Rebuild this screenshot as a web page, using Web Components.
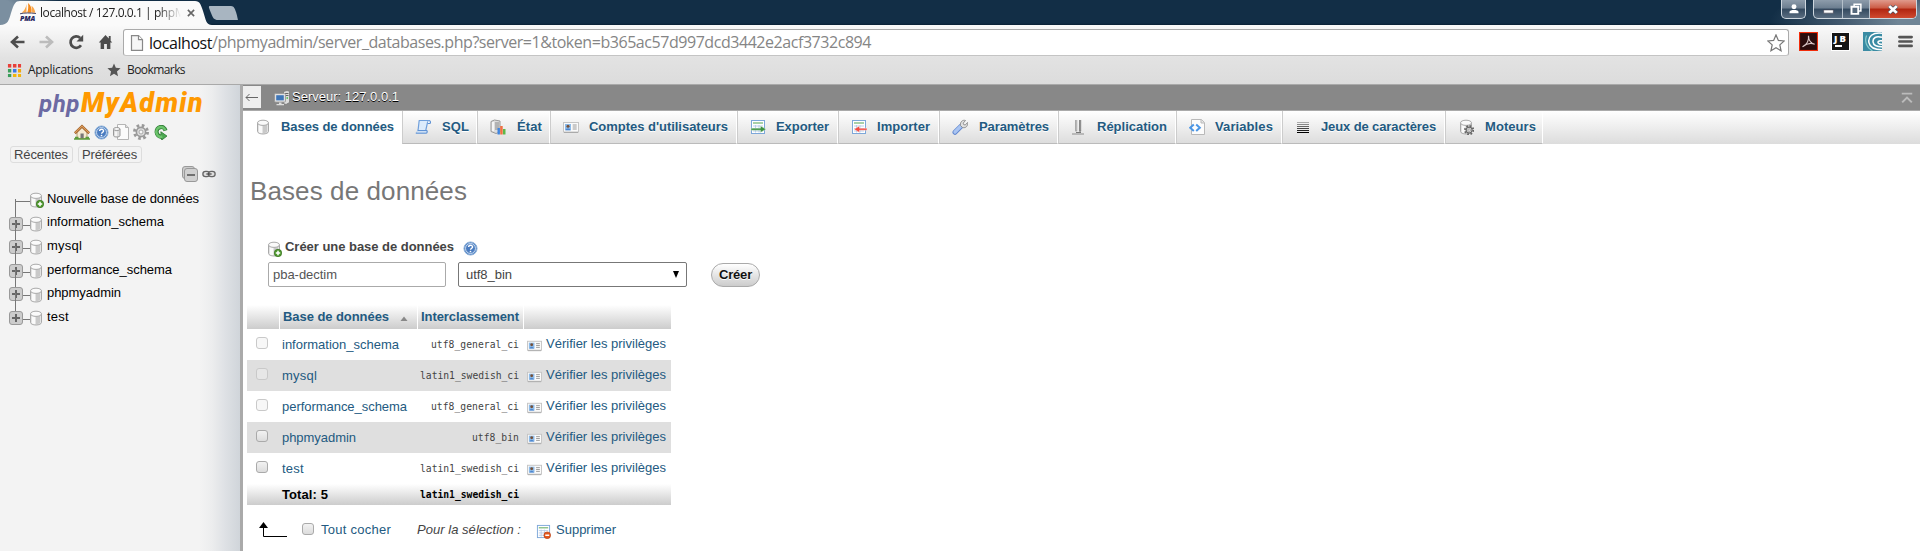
<!DOCTYPE html>
<html lang="fr">
<head>
<meta charset="utf-8">
<title>localhost / 127.0.0.1 | phpMyAdmin</title>
<style>
html,body{margin:0;height:100%;overflow:hidden;background:#fff}
body{font:13px/16px "Liberation Sans",Arial,sans-serif;color:#444;display:flex;flex-direction:column;height:551px}
.work{display:flex;flex:1;min-height:0}
</style>
</head>
<body>
<browser-chrome></browser-chrome>
<div class="work">
  <nav-panel></nav-panel>
  <main-panel></main-panel>
</div>
<script>
const make = (name, html, after) => customElements.define(name, class extends HTMLElement {
  constructor() {
    super();
    const t = document.createElement('template');
    t.innerHTML = html;
    this.attachShadow({mode: 'open'}).appendChild(t.content.cloneNode(true));
  }
  connectedCallback() { if (after) after.call(this, this.shadowRoot); }
});

const DB = '<path d="M2.500 4v8.500c0 1.300 2.400 2.500 5.500 2.500s5.500-1.200 5.500-2.500V4z" fill="#e3e3e3" stroke="#aaa"/><path d="M4 6v7.500l3 .8V6.500z" fill="#fafafa"/><path d="M8 6.500v8l4-1.200V6z" fill="#c9c9c9"/><ellipse cx="8" cy="3.800" rx="5.500" ry="2.600" fill="#fafafa" stroke="#aaa"/>';
const GEAR = (c) => `<circle cx="8" cy="8" r="6.500" fill="none" stroke="${c}" stroke-width="3" stroke-dasharray="2.600 2.500"/><circle cx="8" cy="8" r="4.600" fill="#ddd" stroke="${c}" stroke-width="1.600"/><circle cx="8" cy="8" r="2" fill="#f6f6f6" stroke="${c}" stroke-width=".8"/>`;
const GRID = '<rect x="1.500" y="1.500" width="13" height="13" fill="#fff" stroke="#7da7d9"/><path d="M3 4h10" stroke="#8bc28b" stroke-width="1.500"/><path d="M3 7h10M3 9.500h10M3 12h10M5.500 6v7.500M9 6v7.500" stroke="#b4cbe8" stroke-width=".9"/>';
const ICONS = {
  db: DB,
  dbadd: DB + '<circle cx="12" cy="12" r="3.700" fill="#4f9a2e" stroke="#35701c" stroke-width=".7"/><path d="M12 9.800v4.400M9.800 12h4.400" stroke="#fff" stroke-width="1.500"/>',
  dbgear: DB + `<g transform="translate(6 6) scale(.64)">${GEAR('#666')}</g>`,
  home: '<path d="M3 7.500v7h10v-7L8 3z" fill="#f5ead2" stroke="#a98852" stroke-width=".8"/><path d="M.8 9.200 8 2.400l7.200 6.800" fill="none" stroke="#a0622a" stroke-width="2.600"/><path d="M1 8.800 8 2.200l7 6.600" fill="none" stroke="#e0a060" stroke-width="1.100"/><path d="M6.500 9.500h3.200v5H6.500z" fill="#777"/><path d="M0 15h16M1 13.500h3.500M11.500 13.500H15" stroke="#5c9d3c" stroke-width="1.500"/>',
  help: '<circle cx="8" cy="8" r="7" fill="#5b8cc9" stroke="#8fb0d8"/><circle cx="8" cy="8" r="5.300" fill="#4a7cc0" stroke="#dbe7f5" stroke-width=".9"/><path d="M6 6.500c0-2.500 4.200-2.500 4.200-.2 0 1.400-2.100 1.400-2.100 3" fill="none" stroke="#fff" stroke-width="1.500"/><circle cx="8" cy="11.200" r=".9" fill="#fff"/>',
  doc: '<path d="M4.500.5h8l3 3v12h-11z" fill="#fbfbfb" stroke="#b5b5b5"/><path d="M12.500.5v3h3" fill="#ddd" stroke="#b5b5b5"/><path d="M.5 5v6.500c0 1 1.500 1.500 3.200 1.500S7 12.500 7 11.500V5z" fill="#ddd" stroke="#999"/><ellipse cx="3.750" cy="5" rx="3.250" ry="1.500" fill="#f8f8f8" stroke="#999"/><path d="M3 7.500v4.500" stroke="#fff" stroke-width="1.400"/>',
  gear: GEAR('#999'),
  reload: '<path d="M13.200 6A5.200 5.200 0 1 0 8.300 12.500" fill="none" stroke="#35803b" stroke-width="4.600"/><path d="m7.800 7.200 7 4.600-6 4.200z" fill="#4aa850" stroke="#35803b"/><path d="M12.800 5.500A5.200 5.200 0 1 0 9.500 12.300" fill="none" stroke="#6cc46c" stroke-width="2.800"/>',
  server: '<path d="M9.500 1.500 13 .5l2.500.8v11.200L12 14.500l-2.500-1z" fill="#ddd" stroke="#777" stroke-width=".8"/><path d="M11 3.500h3.500M11 5.500h3.500" stroke="#666"/><path d="M12.500 8h1.500" stroke="#4b4" stroke-width="1.500"/><rect x=".6" y="3.600" width="10.800" height="8.500" rx=".8" fill="#e8e8e8" stroke="#999"/><rect x="2.200" y="5.200" width="7.600" height="5.200" fill="#3f76b8"/><path d="M5 12.500h2.500V14H10v1.300H2.500V14H5z" fill="#ddd"/>',
  sql: '<path d="M4.200 1.500h10.300c-2 0-1.800 1.500-2.200 3l-2 9H1.500c1.300 0 1.300-1.500 1.600-2.500L4 3c.2-1 0-1.500.2-1.500z" fill="#dcebfb" stroke="#6f9fdb" stroke-width="1.200"/><path d="M.8 14.200h10c1.600 0 1.600-2 1-2.500H3M12.500 4.500H15c.8-1 .5-3-1-3" fill="#f2f8ff" stroke="#5f92d4" stroke-width="1.200"/>',
  status: '<path d="M1 2.500 4.500 1 10 2v11l-4 1.500-5-2z" fill="#ddd" stroke="#999"/><path d="M5 4h4M5 6h4M5 8h4M5 10h4" stroke="#888"/><path d="M3 3v9" stroke="#f5f5f5" stroke-width="2"/><path d="M7.500 9h2.400v6.500H7.500z" fill="#3f85e0"/><path d="M10.200 7h2.500v8.500h-2.500z" fill="#f07040"/><path d="M13 10h2.500v5.500H13z" fill="#5cb848"/>',
  card: '<rect x=".5" y="3.500" width="15" height="9.500" fill="#fafafa" stroke="#c5c5c5"/><path d="M1 13.500h14" stroke="#aaa"/><rect x="2" y="5" width="6" height="6.300" fill="#8dbbe9"/><circle cx="5" cy="7.200" r="1.500" fill="#765037"/><path d="M2.500 11.300c.2-2.300 4.800-2.300 5 0z" fill="#4d86cf"/><path d="M9.700 6h4M9.700 8h4M9.700 10h4" stroke="#9a9a9a"/>',
  exp: GRID + '<path d="M1 9.200h9.500V7L16 10.200l-5.500 3.200v-2.200H1z" fill="#3d9140" stroke="#e5f4e5" stroke-width=".4"/>',
  imp: GRID + '<path d="M16 9.200H8.500V7L3 10.200l5.500 3.200v-2.200H16z" fill="#f34b42" stroke="#fff" stroke-width=".4"/>',
  tools: '<path d="m3 13.300 5.800-5.800" stroke="#6288cf" stroke-width="5" stroke-linecap="round"/><path d="m3 13 5.500-5.500" stroke="#a9c4f2" stroke-width="3.200" stroke-linecap="round"/><path d="M8.500 6.500c-.6-3.500 2-6 5-5l-2.300 2.600.5 1.500 1.600.4L15.500 3.500c.8 3-1.500 6-5 5z" fill="#e0e0e0" stroke="#888" stroke-width=".9"/>',
  repl: '<path d="M4 1h2.200v10.500L5 13l-1-1.500z" fill="#aaa"/><path d="M8 1h2.200v11L9 13.500 8 12z" fill="#888"/><path d="M6.200 1v10M10.400 1v10" stroke="#ddd" stroke-width=".8"/><path d="M1 15h12" stroke="#aaa" stroke-width="1.500"/><path d="M5 13.500h5" stroke="#777"/>',
  vars: '<path d="M2.500.5h10l3 3v12h-13z" fill="#fcfcfc" stroke="#b9b9b9"/><path d="M12 .5v3.500h3.500" fill="#e5e5e5" stroke="#b9b9b9"/><path d="M4.800 5.500 1.200 8.700l3.600 3.200M7.200 5.500l3.600 3.200-3.600 3.200" fill="none" stroke="#4a96e6" stroke-width="2"/>',
  lines: '<path d="M2 3.500h12" stroke="#aaa"/><path d="M2 5.500h12" stroke="#888"/><path d="M2 7.500h12" stroke="#666"/><path d="M2 9.500h12" stroke="#444"/><path d="M2 11.500h12" stroke="#222"/><path d="M2 13.500h12" stroke="#000"/>',
  drop: GRID + '<circle cx="12" cy="12" r="3.600" fill="#e2571e" stroke="#b33a10" stroke-width=".6"/><path d="M9.900 12h4.200" stroke="#fff" stroke-width="1.600"/>',
  plus: '<rect x="1.500" y="1.500" width="13" height="13" rx="2.500" fill="#ccc" stroke="#999"/><path d="M8 4v8M4 8h8" stroke="#666" stroke-width="2"/>',
  minus: '<rect x=".5" y=".5" width="12" height="12" rx="2.500" fill="#ccc" stroke="#999"/><rect x="2.500" y="2.500" width="13" height="13" rx="2.500" fill="#d0d0d0" stroke="#999"/><path d="M5 9h8" stroke="#666" stroke-width="1.800"/>',
  link: '<rect x="1" y="5" width="7.500" height="6" rx="3" fill="#ddd" stroke="#666" stroke-width="1.500"/><rect x="7.500" y="5" width="7.500" height="6" rx="3" fill="#ddd" stroke="#666" stroke-width="1.500"/><path d="M5 8h6" stroke="#444" stroke-width="1.400"/>',
  pma: '<path d="M6.500 1v9.500H1.500C4 8.500 6 5 6.500 1z" fill="#f9a74a"/><path d="M8 0c3 2.500 4 6 3.500 10.500H7.200C8.300 7 8.500 4 8 0z" fill="#f58a1c"/><path d="M11.500 3c2 1.500 3.500 4.500 3.800 7.500h-3.100z" fill="#f9a74a"/><path d="M0 11.500c5-1.200 10-1 16-.3" stroke="#446" fill="none"/>',
  back: '<path d="M9 2.500 3 8l6 5.500M3.500 8H15.500" fill="none" stroke="#4d4d4d" stroke-width="2.600"/>',
  fwd: '<path d="m7 2.500 6 5.500-6 5.500M12.500 8H.5" fill="none" stroke="#bcbcbc" stroke-width="2.600"/>',
  refresh: '<path d="M13 11.300A5.700 5.700 0 1 1 12.200 4" fill="none" stroke="#4d4d4d" stroke-width="2.700"/><path d="M15.200.8v6.700H8.500z" fill="#4d4d4d"/>',
  house: '<path d="M8 1 .8 8.500h2V15H6.500v-5h3v5h3.700V8.500h2L13.500 6.700V2h-2v2.500z" fill="#4d4d4d"/>',
  page: '<path d="M2.500.7h7l4 4v10.600h-11z" fill="#f6f6f6" stroke="#888" stroke-width="1.200"/><path d="M9.500.7v4h4" fill="#fff" stroke="#888" stroke-width="1.200"/>',
  apps: '<g><path d="M1 1h4v4H1zM6.300 1h4v4h-4zM11.600 1h3.400v4h-3.400z" fill="#e8403a"/><path d="M1 6.300h4v4H1z" fill="#3a9e5a"/><path d="M6.300 6.300h4v4h-4z" fill="#3b78e7"/><path d="M11.600 6.300h3.400v4h-3.400z" fill="#f2a60c"/><path d="M1 11.600h4V15H1z" fill="#3a9e5a"/><path d="M6.300 11.600h4V15h-4zM11.600 11.600h3.400V15h-3.400z" fill="#f2b50c"/><path d="M5.300 0v16M10.900 0v16M0 5.600h16M0 10.900h16" stroke="#e3e3e3" stroke-width="1.200"/></g>',
  star: '<path d="m8 .5 2.100 5 5.400.5-4.100 3.600 1.200 5.400L8 12.200 3.400 15l1.200-5.400L.5 6l5.400-.5z" fill="#555"/>',
  staro: '<path d="m8 .8 2.100 4.900 5.200.5-3.900 3.500 1.100 5.200L8 12.300l-4.500 2.600 1.100-5.200L.7 6.200l5.200-.5z" fill="#fff" stroke="#777" stroke-width="1.100"/>',
  pdf: '<path d="M0 0h16v16H0z" fill="#f22c0a"/><path d="M.9.900h14.200v14.200H.9z" fill="#2a0d0d"/><path d="M3 12.500C6.500 10.500 8.500 7 8 3.200 8 6 9.500 9.500 13.200 10.300 10 9 6 10 3 12.500z" fill="none" stroke="#d8c6c6" stroke-width="1"/>',
  swirl: '<path d="M0 0h16v16H0z" fill="#3a8ba3"/><path d="M16 1C8 0 4 4 5 9s6 6 11 6M16 4.500c-5-1.500-8 .5-7.500 4S12 12.500 16 12.500M16 7.500c-3-.5-4 1-3 2s2 .8 3 .8" fill="none" stroke="#fff" stroke-width="1.300"/><path d="M3 3C1 8 3 13 8 16" stroke="#8cc" fill="none"/>',
  menu: '<path d="M1.500 3.300h13M1.500 8h13M1.500 12.700h13" stroke="#555" stroke-width="2.900" stroke-linecap="round"/>',
  top: '<path d="M2 3h12" stroke="#bbb" stroke-width="2"/><path d="m2.500 13 5.500-5.500 5.500 5.500" fill="none" stroke="#bbb" stroke-width="2.300"/>',
  close: '<path d="m3 3 10 10M13 3 3 13" stroke="#666" stroke-width="2.600"/>',
  user: '<circle cx="8" cy="5" r="3.300" fill="#fff"/><path d="M2 13.500v-1.500c0-3.500 12-3.500 12 0v1.500z" fill="#fff"/>',
  wmin: '<path d="M2 8.500h12v4H2z" fill="#fff" stroke="#445" stroke-width=".8"/>',
  wmax: '<path d="M5.500 1.500h9v9h-9z" fill="none" stroke="#fff" stroke-width="2"/><path d="M2 5h9v9.500H2z" fill="#56697c" stroke="#fff" stroke-width="2.600"/>',
  wx: '<path d="m3 3 10 10M13 3 3 13" stroke="#456" stroke-width="5.500"/><path d="m3 3 10 10M13 3 3 13" stroke="#fff" stroke-width="3.800"/>'
};

make('ui-icon', '<style>:host{display:inline-block;flex:none}svg{display:block}</style><i-box></i-box>', function (root) {
  const s = this.getAttribute('s') || 16;
  const h = this.getAttribute('h') || s;
  root.querySelector('i-box').innerHTML = `<svg width="${s}" height="${h}" viewBox="0 0 16 16" preserveAspectRatio="none">${ICONS[this.getAttribute('n')] || ''}</svg>`;
});

make('check-box', `<style>:host{display:block;box-sizing:border-box;width:12px;height:12px;border:1px solid #aaa;border-radius:3px;background:linear-gradient(#f2f2f2,#dcdcdc)}
:host([off]){border-color:#c9c9c9;background:rgba(240,240,240,.5)}</style>`);

make('browser-chrome', `<style>
:host{display:flex;flex-direction:column;height:85px;flex:none;box-sizing:border-box;font-family:"Open Sans","Noto Sans",sans-serif;background:linear-gradient(#fafafa 25px,#e2e2e2 58px,#dcdcdc);border-bottom:1px solid #a9a9a9}
.title{height:25px;flex:none;display:flex;background:radial-gradient(ellipse 160px 45px at 1930px 22px,#6f8596 20%,#42596e 55%,transparent),radial-gradient(ellipse 60px 50px at 0 12px,#7b8fa0 25%,transparent),linear-gradient(#122e46 23px,#0b2135)}
.tab{position:relative;width:212px;display:flex;align-items:center;height:25px;font-size:12px;color:#222}
.tab>svg{position:absolute;left:0;top:0}
.tab>*{z-index:1}
.pm{position:relative;margin-left:20px;width:16px;height:20px}
.pm b{position:absolute;left:0;top:12px;font:italic 800 7px/8px "Open Sans",sans-serif;color:#26265e}
.name{margin-left:4px;width:146px;-webkit-mask-image:linear-gradient(90deg,#000 118px,transparent 141px)}
.spacer{flex:1}
.win{display:flex;height:19px;margin-right:3px;gap:7px}
.g{display:flex;border:1px solid #cdd6de;border-top:0;border-radius:0 0 5px 5px;overflow:hidden;box-sizing:border-box;background:linear-gradient(#8d9cab,#6c7e90 45%,#33495f 50%,#5a6d80)}
.g span{display:flex;align-items:center;justify-content:center;border-left:1px solid #b4c0ca}
.g span:first-child{border:0}
.red{background:linear-gradient(#e09a8c,#cb5a44 45%,#b02510 50%,#d04a30)}
.bar{display:flex;align-items:center;height:33px;flex:none;padding-left:9px}
.addr{box-sizing:border-box;display:flex;align-items:center;width:1666px;height:27px;margin-left:10px;border:1px solid #aaa;border-bottom-color:#c4c4c4;border-radius:3px;background:#fff;font-size:16px;line-height:22px;color:#858585;margin-top:2px}
.addr fit-text{margin-top:-1px}
.addr b{font-weight:400;color:#111}
.marks{display:flex;align-items:center;height:26px;padding-left:7px;font-size:12px;color:#222;margin-top:-1px}
.jb{box-sizing:border-box;width:19px;height:19px;background:#161616;border:1px solid #fff;color:#fff;font:800 9.500px/10px "Open Sans",sans-serif;padding:1px 0 0 2px}
.jb i{display:block;width:7px;height:1.500px;background:#fff;margin:1px 0 0 1px}
</style>
<div class="title">
 <div class="tab"><svg width="240" height="25"><path d="M0 25C8 25 9 20 11 13 14 4 15 1 20 1H195c5 0 6 4 8 10 3 9 3 14 9 14z" fill="#fafafa"/><path d="M210 6h21c3 0 4 3 5 6s2 8 2 8h-20c-4 0-5-2-7-7s-3-7-1-7z" fill="#a8b5c1"/></svg>
 <div class="pm"><ui-icon n="pma" s="16" h="15"></ui-icon><b><fit-text w="15">PMA</fit-text></b></div><div class="name"><fit-text w="145">localhost / 127.0.0.1 | phpM</fit-text></div><ui-icon n="close" s="10"></ui-icon></div>
 <div class="spacer"></div>
 <div class="win"><div class="g" style="width:25px"><span style="width:23px"><ui-icon n="user" s="12"></ui-icon></span></div>
 <div class="g" style="width:104px"><span style="width:29px"><ui-icon n="wmin" s="13"></ui-icon></span><span style="width:26px"><ui-icon n="wmax" s="12"></ui-icon></span><span class="red" style="width:47px"><ui-icon n="wx" s="12" h="11"></ui-icon></span></div></div>
</div>
<div class="bar">
 <ui-icon n="back"></ui-icon><ui-icon n="fwd" style="margin-left:14px"></ui-icon><ui-icon n="refresh" style="margin-left:13px"></ui-icon><ui-icon n="house" s="15" h="16" style="margin-left:14px"></ui-icon>
 <div class="addr"><ui-icon n="page" s="16" style="margin:0 4px 0 5px"></ui-icon><b><fit-text w="63">localhost</fit-text></b><fit-text w="659">/phpmyadmin/server_databases.php?server=1&amp;token=b365ac57d997dcd3442e2acf3732c894</fit-text><div class="spacer"></div><ui-icon n="staro" s="18" style="margin-right:3px"></ui-icon></div>
 <ui-icon n="pdf" s="19" style="margin-left:10px"></ui-icon><div class="jb" style="margin-left:13px"><fit-text w="14">JB</fit-text><i></i></div><ui-icon n="swirl" s="19" style="margin-left:13px"></ui-icon><ui-icon n="menu" s="15" style="margin-left:16px"></ui-icon>
</div>
<div class="marks"><ui-icon n="apps" s="15"></ui-icon><fit-text w="65" style="margin-left:6px">Applications</fit-text><ui-icon n="star" s="14" style="margin-left:14px"></ui-icon><fit-text w="58" style="margin-left:6px">Bookmarks</fit-text></div>`);

make('tree-item', `<style>
:host{display:flex;align-items:center;height:23.600px;color:#000;position:relative}
.v{position:absolute;left:15px;top:-12px;width:1px;height:24px;background:#777}
:host([first]) .v{top:15px;height:10px}
.h{position:absolute;left:15px;top:14px;width:15px;height:1px;background:#777}
.p{position:absolute;left:8px;top:5px}
:host([first]) .p{display:none}
.d{margin:3px 3px 0 28px}
</style><span class="v"></span><span class="h"></span><ui-icon class="p" n="plus" s="16"></ui-icon><ui-icon class="d" n="db"></ui-icon><slot></slot>`, function (root) {
  if (this.hasAttribute('first')) {
    const d = root.querySelector('.d');
    d.setAttribute('n', 'dbadd');
    d.connectedCallback();
  }
});

make('nav-panel', `<style>
:host{display:block;width:240px;flex:none;border-right:3px solid #aaa;background:linear-gradient(90deg,#f3f3f3 200px,#ecedee 212px,#dde0e4 226px,#d0d5da)}
.logo{display:flex;align-items:baseline;gap:1px;height:37px;padding:4px 0 0 39px;box-sizing:border-box;font:italic 900 27px/28px Roboto,"Open Sans",sans-serif;color:#f90}
.logo span{color:#6c6aa3;font-weight:700;font-size:24px}
.icons{display:flex;height:20px;align-items:center;padding-left:74px;gap:4px}
.btns{display:flex;padding:4px 0 0 10px;gap:5px}
.btns div{box-sizing:border-box;height:17px;border:1px solid #ddd;border-radius:3px;line-height:15px;padding-left:3px;font-size:13px}
.tools{display:flex;align-items:center;padding:3px 0 0 182px;gap:4px;height:16px}
.tree{display:block;margin-top:5px}
</style>
<div class="logo"><span><fit-text w="41">php</fit-text></span><fit-text w="123">MyAdmin</fit-text></div>
<div class="icons"><ui-icon n="home"></ui-icon><ui-icon n="help" s="15"></ui-icon><ui-icon n="doc"></ui-icon><ui-icon n="gear"></ui-icon><ui-icon n="reload" s="14" h="15" style="margin-left:1px"></ui-icon></div>
<div class="btns"><div style="width:63px"><fit-text w="54">Récentes</fit-text></div><div style="width:64px"><fit-text w="55">Préférées</fit-text></div></div>
<div class="tools"><ui-icon n="minus"></ui-icon><ui-icon n="link" s="14"></ui-icon></div>
<div class="tree">
<tree-item first><fit-text w="152">Nouvelle base de données</fit-text></tree-item>
<tree-item><fit-text w="117">information_schema</fit-text></tree-item>
<tree-item><fit-text w="35">mysql</fit-text></tree-item>
<tree-item><fit-text w="125">performance_schema</fit-text></tree-item>
<tree-item><fit-text w="74">phpmyadmin</fit-text></tree-item>
<tree-item><fit-text w="22">test</fit-text></tree-item>
</div>`);

make('menu-tab', `<style>
:host{display:flex;align-items:center;box-sizing:border-box;height:33px;border-left:1px solid #ccc;border-right:1px solid #fff;border-bottom:1px solid #bbb;font-weight:bold;color:#235a81;text-shadow:0 1px 0 #fff;padding-left:12px}
:host([active]){background:#fff;border-color:#fff;padding-left:11px}
:host([wide]) ui-icon{margin-right:11px}
ui-icon{margin-right:10px}
</style><ui-icon></ui-icon><slot></slot>`, function (root) {
  this.style.width = this.getAttribute('w') + 'px';
  const i = root.querySelector('ui-icon');
  i.setAttribute('n', this.getAttribute('icon'));
  i.connectedCallback();
});

make('db-row', `<style>
:host{display:grid;grid-template-columns:35px 138px 99px 8px 1fr;align-items:center;height:31px;color:#235a81}
:host([odd]){background:#dfdfdf}
check-box{margin-left:9px;margin-top:-3px}
.c{font:9.700px/14px "DejaVu Sans Mono",monospace;color:#444;text-align:right;justify-self:end}
.p{display:flex;align-items:center;margin-top:-2px}
.p ui-icon{margin:4px 4px 0 0}
</style><check-box></check-box><div><slot></slot></div><div class="c"><slot name="coll"></slot></div><div></div><div class="p"><ui-icon n="card" s="15"></ui-icon><fit-text w="120">Vérifier les privilèges</fit-text></div>`, function (root) {
  if (this.hasAttribute('off')) root.querySelector('check-box').setAttribute('off', '');
});

make('main-panel', `<style>
:host{display:block;flex:1;min-width:0;background:#fff}
.srv{display:flex;align-items:center;height:25px;background:#888;border-bottom:1px solid #aaa;color:#fff;text-shadow:0 1px 0 #000}
.bk{width:18px;height:22px;background:#eee;display:flex;align-items:center;justify-content:center;margin-right:13px;margin-top:-1px}
.srv fit-text{margin-top:-2px}
.tabs{display:flex;height:33px;background:linear-gradient(#fff,#dcdcdc)}
h2{margin:31px 0 0 7px;font-weight:400;font-size:26px;line-height:32px;color:#777}
.create{display:flex;align-items:center;margin:31px 0 0 23px;font-weight:bold;height:18px}
.form{display:flex;align-items:center;margin:5px 0 0 25px;height:27px}
.in{box-sizing:border-box;height:25px;border:1px solid #aaa;border-radius:2px;display:flex;align-items:center;justify-content:space-between;padding:0 4px;color:#555}
.sel{border-color:#777;margin-left:12px;padding:0 6px 0 7px;color:#444}
.go{box-sizing:border-box;width:49px;height:24px;margin-left:24px;border:1px solid #aaa;border-radius:12px;background:linear-gradient(#fff,#ccc);display:flex;align-items:center;justify-content:center;color:#111;text-shadow:0 1px 0 #fff}
.t{width:424px;margin:17px 0 0 4px}
.hd{display:grid;grid-template-columns:32px 137px 105px 1fr;gap:1px;height:24px;align-items:stretch;font-weight:bold;color:#235a81}
.hd div{background:linear-gradient(#fff,#ccc);padding-left:3px;display:flex;align-items:center;box-sizing:border-box}
.hd fit-text{margin-top:-1px}
.ft{display:grid;grid-template-columns:35px 138px 99px 1fr;height:21px;align-items:center;background:linear-gradient(#fff,#ccc);font-weight:bold;color:#000}
.mono{font:bold 9.700px/14px "DejaVu Sans Mono",monospace}
.act{display:flex;align-items:center;margin:15px 0 0 16px;height:20px;color:#235a81}
</style>
<div class="srv"><span class="bk"><svg width="14" height="9"><path d="M4.500 1 1 4.500 4.500 8M1 4.500h12" fill="none" stroke="#666"/></svg></span><ui-icon n="server" style="margin-right:2px"></ui-icon><fit-text w="107">Serveur: 127.0.0.1</fit-text><span style="flex:1"></span><ui-icon n="top" s="14" style="margin-right:6px"></ui-icon></div>
<div class="tabs">
<menu-tab active w="159" icon="db"><fit-text w="113">Bases de données</fit-text></menu-tab>
<menu-tab wide w="75" icon="sql"><fit-text w="27">SQL</fit-text></menu-tab>
<menu-tab wide w="73" icon="status"><fit-text w="25">État</fit-text></menu-tab>
<menu-tab w="187" icon="card"><fit-text w="139">Comptes d'utilisateurs</fit-text></menu-tab>
<menu-tab w="101" icon="exp"><fit-text w="53">Exporter</fit-text></menu-tab>
<menu-tab w="101" icon="imp"><fit-text w="53">Importer</fit-text></menu-tab>
<menu-tab wide w="119" icon="tools"><fit-text w="70">Paramètres</fit-text></menu-tab>
<menu-tab w="118" icon="repl"><fit-text w="70">Réplication</fit-text></menu-tab>
<menu-tab w="106" icon="vars"><fit-text w="58">Variables</fit-text></menu-tab>
<menu-tab w="163" icon="lines"><fit-text w="115">Jeux de caractères</fit-text></menu-tab>
<menu-tab wide w="98" icon="dbgear"><fit-text w="51">Moteurs</fit-text></menu-tab>
</div>
<h2><fit-text w="217">Bases de données</fit-text></h2>
<div class="create"><ui-icon n="dbadd" s="16" style="margin:3px 3px 0 0"></ui-icon><fit-text w="169">Créer une base de données</fit-text><ui-icon n="help" s="15" style="margin:3px 0 0 9px"></ui-icon></div>
<div class="form"><div class="in" style="width:178px"><fit-text w="64">pba-dectim</fit-text></div><div class="in sel" style="width:229px"><fit-text w="46">utf8_bin</fit-text><svg width="8" height="8"><path d="M1 0h6L4 7z" fill="#000"/></svg></div><div class="go"><fit-text w="33" style="font-weight:bold">Créer</fit-text></div></div>
<div class="t">
<div class="hd"><div></div><div><fit-text w="106">Base de données</fit-text><svg width="8" height="5" style="margin:2px 0 0 11px"><path d="M.500 5 4 .5 7.500 5z" fill="#888"/></svg></div><div><fit-text w="98">Interclassement</fit-text></div><div></div></div>
<db-row off><fit-text w="117">information_schema</fit-text><fit-text w="88" slot="coll">utf8_general_ci</fit-text></db-row>
<db-row off odd><fit-text w="35">mysql</fit-text><fit-text w="99" slot="coll">latin1_swedish_ci</fit-text></db-row>
<db-row off><fit-text w="125">performance_schema</fit-text><fit-text w="88" slot="coll">utf8_general_ci</fit-text></db-row>
<db-row odd><fit-text w="74">phpmyadmin</fit-text><fit-text w="47" slot="coll">utf8_bin</fit-text></db-row>
<db-row><fit-text w="22">test</fit-text><fit-text w="99" slot="coll">latin1_swedish_ci</fit-text></db-row>
<div class="ft"><span></span><fit-text w="46">Total: 5</fit-text><span class="mono"><fit-text w="99">latin1_swedish_ci</fit-text></span></div>
</div>
<div class="act"><svg width="28" height="16"><path d="M4.500 3v11.500H28" fill="none" stroke="#000"/><path d="M0 6 4.500 0 9 6z"/></svg><check-box style="margin-left:15px;margin-top:-3px"></check-box><fit-text w="70" style="margin-left:7px">Tout cocher</fit-text><fit-text w="104" style="margin-left:26px;font-style:italic;color:#444">Pour la sélection :</fit-text><ui-icon n="drop" s="15" style="margin:3px 0 0 15px"></ui-icon><fit-text w="60" style="margin-left:5px">Supprimer</fit-text></div>`);

/* Text run stretched or tightened to a set width through its tracking. */
customElements.define('fit-text', class extends HTMLElement {
  constructor() {
    super();
    this.attachShadow({mode: 'open'}).innerHTML = '<style>:host{display:inline-block;white-space:pre;flex:none;justify-self:start;vertical-align:baseline}</style><slot></slot>';
  }
  connectedCallback() {
    const want = +this.getAttribute('w');
    const have = this.getBoundingClientRect().width;
    this.style.letterSpacing = (want - have) / this.textContent.length + 'px';
    this.style.width = want + 'px';
  }
});
</script>
</body>
</html>
